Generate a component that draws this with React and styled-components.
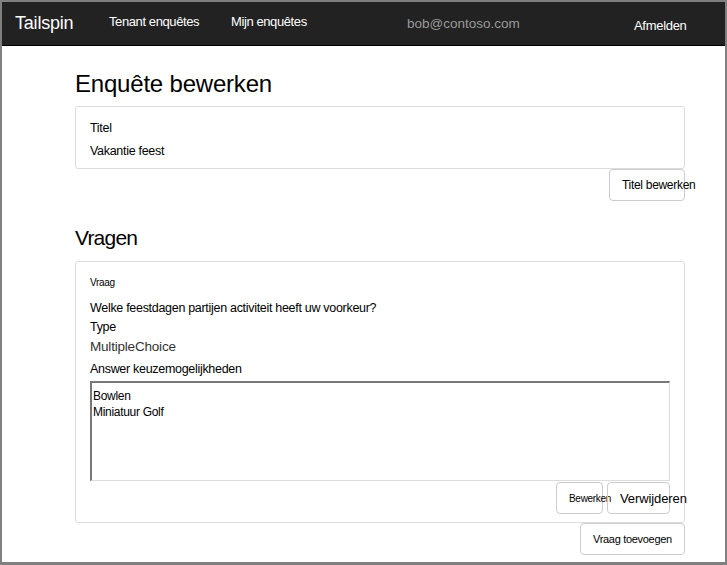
import React from "react";
import styled, { createGlobalStyle } from "styled-components";

const GlobalStyle = createGlobalStyle`
  html, body { margin: 0; padding: 0; background: #fff; }
  body { font-family: "Liberation Sans", Arial, sans-serif; color: #000; }
  * { box-sizing: border-box; }
`;

const Frame = styled.div`
  width: 727px;
  height: 565px;
  border-style: solid;
  border-color: #808080;
  border-width: 2px 2px 3px 2px;
  overflow: hidden;
  background: #fff;
`;

const NavBar = styled.nav`
  height: 44px;
  background: #222;
  border-bottom: 1px solid #000;
  display: flex;
  align-items: flex-start;
`;

const Brand = styled.span`
  margin-left: 13px;
  margin-top: 11px;
  font-size: 18px;
  color: #fff;
  letter-spacing: -0.2px;
  width: 94px;
`;

const NavLink = styled.span`
  margin-top: ${(p) => p.$top}px;
  width: ${(p) => p.$w}px;
  font-size: ${(p) => p.$size || 13}px;
  color: ${(p) => p.$color || "#fff"};
  letter-spacing: ${(p) => p.$ls ?? -0.4}px;
  white-space: nowrap;
`;

const Content = styled.main`
  padding: 0 0 0 73px;
  width: 683px;
`;

const Heading = styled.h1`
  margin: ${(p) => p.$mt}px 0 ${(p) => p.$mb}px;
  font-size: ${(p) => p.$size}px;
  line-height: ${(p) => p.$lh}px;
  font-weight: normal;
  letter-spacing: ${(p) => p.$ls}px;
`;

const Panel = styled.section`
  border: 1px solid #ddd;
  border-radius: 3px;
  padding: ${(p) => p.$pad};
`;

const Field = styled.div`
  font-size: ${(p) => p.$size || 12.5}px;
  line-height: ${(p) => p.$lh || 19}px;
  margin-top: ${(p) => p.$mt || 0}px;
  color: ${(p) => p.$color || "#000"};
  letter-spacing: ${(p) => p.$ls ?? -0.3}px;
`;

const ButtonRow = styled.div`
  display: flex;
  justify-content: flex-end;
  gap: 4px;
  margin-top: ${(p) => p.$mt || 0}px;
`;

const Button = styled.button`
  width: ${(p) => p.$w}px;
  height: 32px;
  padding: 0 0 0 12px;
  background: transparent;
  border: 1px solid #ccc;
  border-radius: 4px;
  font-family: "Liberation Sans", Arial, sans-serif;
  font-size: ${(p) => p.$size}px;
  letter-spacing: ${(p) => p.$ls ?? -0.3}px;
  color: #000;
  text-align: left;
  white-space: nowrap;
  overflow: visible;
`;

const Answers = styled.textarea`
  display: block;
  width: 100%;
  height: 100px;
  margin-top: 2px;
  resize: none;
  border-style: solid;
  border-width: 2px 1px 1px 2px;
  border-color: #777 #ddd #ddd #777;
  padding: 5px 1px;
  font-family: "Liberation Sans", Arial, sans-serif;
  font-size: 12px;
  line-height: 16px;
  letter-spacing: -0.3px;
  color: #000;
  outline: none;
`;

export default function App() {
  return (
    <>
      <GlobalStyle />
      <Frame>
        <NavBar>
          <Brand>Tailspin</Brand>
          <NavLink $top={12} $w={122}>Tenant enquêtes</NavLink>
          <NavLink $top={12} $w={176}>Mijn enquêtes</NavLink>
          <NavLink $top={14} $w={227} $size={13.5} $color="#999" $ls={0}>bob@contoso.com</NavLink>
          <NavLink $top={16} $w={60} $ls={-0.3}>Afmelden</NavLink>
        </NavBar>
        <Content>
          <Heading $mt={24} $mb={8} $size={24} $lh={28} $ls={-0.2}>Enquête bewerken</Heading>
          <Panel $pad="11px 14px 7px">
            <Field $size={12.5} $lh={20}>Titel</Field>
            <Field $size={12.5} $lh={20} $mt={3}>Vakantie feest</Field>
          </Panel>
          <ButtonRow>
            <Button $w={76} $size={12}>Titel bewerken</Button>
          </ButtonRow>
          <Heading $mt={24} $mb={10} $size={21} $lh={26} $ls={-0.8}>Vragen</Heading>
          <Panel $pad="13px 14px 8px">
            <Field $size={10} $lh={16}>Vraag</Field>
            <Field $mt={7.5}>Welke feestdagen partijen activiteit heeft uw voorkeur?</Field>
            <Field>Type</Field>
            <Field $size={13.5} $lh={20} $mt={0.5} $color="#333" $ls={-0.2}>MultipleChoice</Field>
            <Field $lh={20} $mt={2}>Answer keuzemogelijkheden</Field>
            <Answers readOnly defaultValue={"Bowlen\nMiniatuur Golf"} />
            <ButtonRow $mt={1}>
              <Button $w={47} $size={10}>Bewerken</Button>
              <Button $w={63} $size={13} $ls={-0.1}>Verwijderen</Button>
            </ButtonRow>
          </Panel>
          <ButtonRow>
            <Button $w={105} $size={11}>Vraag toevoegen</Button>
          </ButtonRow>
        </Content>
      </Frame>
    </>
  );
}
